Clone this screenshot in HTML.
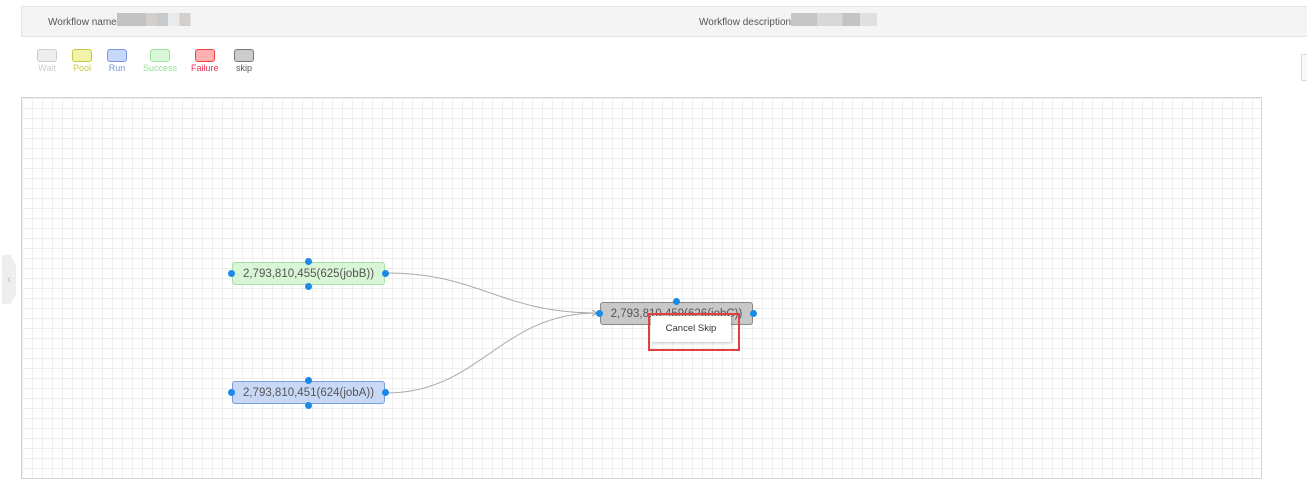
<!DOCTYPE html>
<html><head><meta charset="utf-8"><style>
body{margin:0;width:1307px;height:464px;overflow:hidden;background:#fff;font-family:"Liberation Sans",sans-serif;position:relative}
.hdr{position:absolute;left:21px;top:6px;width:1290px;height:29px;background:#f4f4f4;border-top:1px solid #e2e2ee;border-bottom:1px solid #e2e2ee;border-left:1px solid #e2e2ee;font-size:10px;color:#555}
.hdr span{position:absolute;top:10px}
.blur{position:absolute;top:6px;height:13px}
.lg{position:absolute;top:49px;font-size:9px;text-align:center;line-height:11px}
.lg i{display:block;width:18px;height:11px;border-radius:3px;border:1px solid;margin:0 auto 1px}
.canvas{position:absolute;left:21px;top:97px;width:1239px;height:380px;border:1px solid #d4d4d4;background-color:#fff;background-image:linear-gradient(#eeeeee 1px,transparent 1px),linear-gradient(90deg,#eeeeee 1px,transparent 1px);background-size:10px 10px}
.node{position:absolute;width:153px;height:23px;border:1px solid;border-radius:3px;font-size:11.5px;color:#555;text-align:center;line-height:23px;box-sizing:border-box}
.dot{position:absolute;width:7px;height:7px;border-radius:50%;background:#1a8ae6}
</style></head><body>
<div class="hdr"><span style="left:26px">Workflow name:</span>
<div class="blur" style="left:95px;width:80px;background:linear-gradient(90deg,#c2c2c2 0 36%,#d3d0cb 36% 50%,#c8cacb 50% 64%,#e8eaeb 64% 78%,#d3d0cb 78% 92%,#f4f4f4 92%)"></div>
<span style="left:677px">Workflow description:</span>
<div class="blur" style="left:769px;width:86px;background:linear-gradient(90deg,#c6c6c6 0 30%,#d8d8d8 30% 60%,#c4c4c4 60% 80%,#e0e0e0 80%)"></div>
</div>
<div class="lg" style="left:37px;color:#ccc"><i style="background:#eee;border-color:#ccc"></i>Wait</div>
<div class="lg" style="left:72px;color:#c8c840"><i style="background:#f2f2a8;border-color:#c8c840"></i>Pool</div>
<div class="lg" style="left:107px;color:#7a98e0"><i style="background:#c8d8fa;border-color:#7a98e0"></i>Run</div>
<div class="lg" style="left:143px;color:#90e090"><i style="background:#d8f8d8;border-color:#a0e0a0"></i>Success</div>
<div class="lg" style="left:191px;color:#f03050"><i style="background:#ffb0b0;border-color:#f04040"></i>Failure</div>
<div class="lg" style="left:234px;color:#555"><i style="background:#ccc;border-color:#777"></i>skip</div>
<div style="position:absolute;left:1301px;top:54px;width:8px;height:25px;border:1px solid #ddd;background:#f8f8f8"></div>
<div style="position:absolute;left:2px;top:255px;width:14px;height:49px;background:#eee;clip-path:polygon(0 0,60% 0,100% 20%,100% 80%,60% 100%,0 100%);color:#bbb;font-size:12px;line-height:49px;text-align:center">‹</div>
<div class="canvas"></div>
<svg style="position:absolute;left:0;top:0" width="1307" height="464">
<path d="M386 273 C480 273,500 313,597 313" stroke="#aaa" fill="none"/>
<path d="M386 393 C480 393,500 313,597 313" stroke="#aaa" fill="none"/>
<path d="M592 310 L597 313 L592 316" stroke="#999" fill="none"/>
</svg>
<div class="node" style="left:232px;top:262px;background:#d8f5d5;border-color:#a8e0a8">2,793,810,455(625(jobB))</div>
<div class="node" style="left:232px;top:381px;background:#c8d8f5;border-color:#7a9ee0">2,793,810,451(624(jobA))</div>
<div class="node" style="left:600px;top:302px;background:#c8c8c8;border-color:#888">2,793,810,459(626(jobC))</div>
<div class="dot" style="left:305px;top:258px"></div><div class="dot" style="left:305px;top:283px"></div><div class="dot" style="left:228px;top:270px"></div><div class="dot" style="left:382px;top:270px"></div>
<div class="dot" style="left:305px;top:377px"></div><div class="dot" style="left:305px;top:402px"></div><div class="dot" style="left:228px;top:389px"></div><div class="dot" style="left:382px;top:389px"></div>
<div class="dot" style="left:673px;top:298px"></div><div class="dot" style="left:596px;top:310px"></div><div class="dot" style="left:750px;top:310px"></div>
<div style="position:absolute;left:648px;top:313px;width:92px;height:38px;border:2px solid #e04040;box-sizing:border-box"></div>
<div style="position:absolute;left:651px;top:316px;width:80px;height:26px;background:#fff;box-shadow:1px 1px 3px rgba(0,0,0,.25);font-size:9.5px;color:#333;text-align:center;line-height:26px">Cancel Skip</div>
</body></html>
